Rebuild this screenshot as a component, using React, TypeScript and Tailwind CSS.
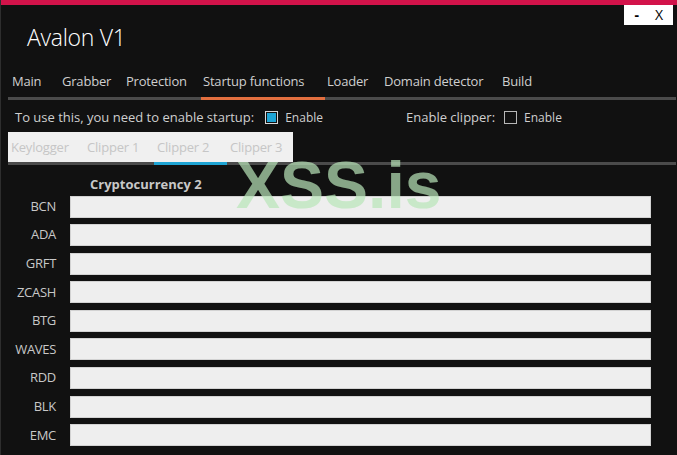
const mainTabs = [
  { label: "Main", w: "w-[52px]" },
  { label: "Grabber", w: "w-[64px]" },
  { label: "Protection", w: "w-[77px]" },
  { label: "Startup functions", w: "w-[124px]", active: true },
  { label: "Loader", w: "w-[57px]" },
  { label: "Domain detector", w: "w-[118px]" },
  { label: "Build", w: "w-[50px]" },
]

const subTabs = [
  { label: "Keylogger", w: "w-[76px]" },
  { label: "Clipper 1", w: "w-[70px]" },
  { label: "Clipper 2", w: "w-[73px]", active: true },
  { label: "Clipper 3", w: "w-[66px]" },
]

const coins = ["BCN", "ADA", "GRFT", "ZCASH", "BTG", "WAVES", "RDD", "BLK", "EMC"]

function Checkbox({ checked }: { checked?: boolean }) {
  return checked ? (
    <span className="inline-block w-[13px] h-[13px] border border-[#d8d8d8] p-[1px] bg-[#111111]">
      <span className="block w-full h-full bg-[#1ea4d4]" />
    </span>
  ) : (
    <span className="inline-block w-[13px] h-[13px] border border-[#b8b8b8]" />
  )
}

export default function App() {
  return (
    <div className="relative w-[677px] h-[455px] overflow-hidden bg-[#111111] border-l border-[#2e2e2e] font-['Open_Sans',sans-serif] text-[#cfcfcf]">
      {/* title bar */}
      <div className="h-[5px] bg-[#d2134a]" />
      <div className="flex justify-between h-[67px]">
        <h1 className="pl-[26px] pt-[21px] text-[23px] font-light text-white leading-none tracking-[-0.3px]">
          Avalon V1
        </h1>
        <div className="flex items-center gap-[16px] h-[20px] mr-[4px] pl-[10px] pr-[10px] bg-white text-black text-[14px] leading-none">
          <span className="font-bold">-</span>
          <span>X</span>
        </div>
      </div>

      {/* main tabs */}
      <div className="flex ml-[7px] mr-[1px] border-b-[3px] border-[#4b4b4b] text-[13px] tracking-[-0.2px]">
        {mainTabs.map((t, i) => (
          <div
            key={t.label}
            className={`${t.w} ${i === 0 ? "pl-[4px]" : "pl-[2px]"} pb-[5px] -mb-[3px] border-b-[3px] ${
              t.active ? "border-[#e36f3f]" : "border-transparent"
            }`}
          >
            {t.label}
          </div>
        ))}
      </div>

      {/* options */}
      <div className="flex items-center h-[32px] pt-[4px] pl-[14px] text-[13px]">
        <span>To use this, you need to enable startup:</span>
        <span className="ml-[11px] mr-[7px] flex"><Checkbox checked /></span>
        <span className="text-[12px]">Enable</span>
        <span className="ml-[83px]">Enable clipper:</span>
        <span className="ml-[9px] mr-[7px] flex"><Checkbox /></span>
        <span className="text-[12px]">Enable</span>
      </div>

      {/* clipper tabs */}
      <div className="flex ml-[7px] mr-[1px] border-b-[3px] border-[#4b4b4b] text-[13px] tracking-[-0.2px] text-[#c6c6c6]">
        <div className="flex bg-[#f0f0f0] h-[30px]">
          {subTabs.map((t) => (
            <div
              key={t.label}
              className={`${t.w} pl-[3px] pt-[6px] -mb-[3px] border-b-[3px] ${
                t.active ? "border-[#1ea4d4]" : "border-transparent"
              }`}
            >
              {t.label}
            </div>
          ))}
        </div>
      </div>

      {/* coin addresses */}
      <div className="pt-[10px] text-[13px]">
        <div className="pl-[89px] font-bold text-[#c8c8c8] leading-[18px] mb-[3px]">Cryptocurrency 2</div>
        <div className="flex flex-col gap-[6.6px]">
          {coins.map((c) => (
            <div key={c} className="flex items-center">
              <span className="w-[55px] text-right text-[#c8c8c8] tracking-[-0.3px]">{c}</span>
              <div className="ml-[14px] w-[581px] h-[22px] bg-[#eeeeee] border border-[#d2d2d2]" />
            </div>
          ))}
        </div>
      </div>

      {/* watermark */}
      <div className="absolute left-[235px] top-[152px] text-[66px] font-bold font-['Liberation_Sans',sans-serif] text-[#b9e6b9] opacity-70 leading-none pointer-events-none">
        XSS.is
      </div>
    </div>
  )
}
